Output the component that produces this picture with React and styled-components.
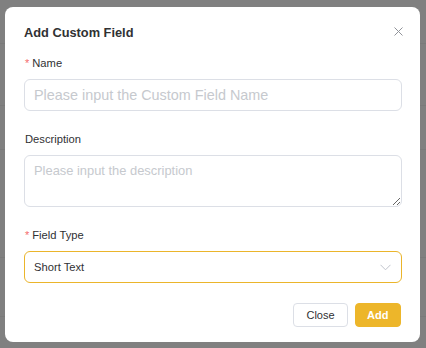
import React from "react";
import styled, { createGlobalStyle } from "styled-components";

const GlobalStyle = createGlobalStyle`
	body {
		margin: 0;
		background: #808080;
		font-family: "Liberation Sans", Arial, sans-serif;
	}
`;

const Backdrop = styled.div`
	width: 426px;
	height: 348px;
	box-sizing: border-box;
	padding: 7px 6px 6px 5px;
	background-color: #808080;
	background-image:
		linear-gradient(#7a7a7a, #7a7a7a),
		linear-gradient(#7a7a7a, #7a7a7a),
		linear-gradient(#7a7a7a, #7a7a7a),
		linear-gradient(#7a7a7a, #7a7a7a),
		linear-gradient(#7a7a7a, #7a7a7a);
	background-size: 100% 1px;
	background-repeat: no-repeat;
	background-position: 0 43px, 0 105px, 0 149px, 0 257px, 0 316px;
	display: flex;
`;

const Dialog = styled.div`
	position: relative;
	flex: 1;
	background: #fff;
	border-radius: 8px;
	display: flex;
	flex-direction: column;
`;

const Header = styled.div`
	padding: 16px 18px 10px 19px;
`;

const Title = styled.h2`
	margin: 0;
	font-size: 12.8px;
	line-height: 20px;
	font-weight: bold;
	color: #303133;
`;

const CloseIcon = styled.button`
	position: absolute;
	top: 18px;
	right: 16px;
	width: 12px;
	height: 12px;
	padding: 0;
	border: none;
	background: transparent;
	display: flex;
	align-items: center;
	justify-content: center;
	cursor: pointer;
`;

const Body = styled.div`
	padding: 0 18px 0 19px;
	display: flex;
	flex-direction: column;
	gap: 18px;
`;

const Item = styled.div`
	display: flex;
	flex-direction: column;
	gap: 6px;
`;

const Label = styled.label`
	font-size: 11.2px;
	line-height: 20px;
	color: #303133;
	padding-left: 1px;
`;

const Star = styled.span`
	color: #f56c6c;
	margin-right: 3px;
	font-size: 11px;
`;

const Input = styled.input`
	box-sizing: border-box;
	width: 100%;
	height: 32px;
	border: 1px solid #dcdfe6;
	border-radius: 6px;
	padding: 0 9px;
	font-family: inherit;
	font-size: 14.4px;
	color: #303133;
	outline: none;
	&::placeholder {
		color: #c6c9ce;
	}
`;

const TextArea = styled.textarea`
	box-sizing: border-box;
	display: block;
	width: 100%;
	height: 52px;
	border: 1px solid #dcdfe6;
	border-radius: 6px;
	padding: 5px 9px;
	font-family: inherit;
	font-size: 12.9px;
	line-height: 20px;
	color: #303133;
	outline: none;
	&::placeholder {
		color: #c6c9ce;
	}
`;

const Select = styled.div`
	box-sizing: border-box;
	height: 32px;
	border: 1px solid #ebb52b;
	border-radius: 6px;
	padding: 0 10px 0 9px;
	display: flex;
	align-items: center;
	justify-content: space-between;
	font-size: 11.2px;
	color: #303133;
`;

const Footer = styled.div`
	margin-top: 20px;
	padding: 0 19px 15px 19px;
	display: flex;
	justify-content: flex-end;
	gap: 7px;
`;

const Button = styled.button`
	box-sizing: border-box;
	height: 24px;
	padding: 0 ${(p) => (p.primary ? "11.5px" : "12px")};
	border-radius: 4px;
	font-family: inherit;
	font-size: 11px;
	cursor: pointer;
	border: 1px solid ${(p) => (p.primary ? "#edb62a" : "#dcdfe6")};
	background: ${(p) => (p.primary ? "#edb62a" : "#fff")};
	color: ${(p) => (p.primary ? "#fff" : "#303133")};
	font-weight: ${(p) => (p.primary ? "bold" : "normal")};
`;

export default function App() {
	return (
		<>
			<GlobalStyle />
			<Backdrop>
				<Dialog>
					<Header>
						<Title>Add Custom Field</Title>
					</Header>
					<CloseIcon aria-label="close">
						<svg width="9" height="9" viewBox="0 0 9 9">
							<path d="M0.5 0.5L8.5 8.5M8.5 0.5L0.5 8.5" stroke="#909399" strokeWidth="1" />
						</svg>
					</CloseIcon>
					<Body>
						<Item>
							<Label>
								<Star>*</Star>Name
							</Label>
							<Input placeholder="Please input the Custom Field Name" />
						</Item>
						<Item>
							<Label>Description</Label>
							<TextArea placeholder="Please input the description" />
						</Item>
						<Item>
							<Label>
								<Star>*</Star>Field Type
							</Label>
							<Select>
								<span>Short Text</span>
								<svg width="11" height="7" viewBox="0 0 11 7">
									<path d="M0.5 0.8L5.5 5.8L10.5 0.8" fill="none" stroke="#c0c4cc" strokeWidth="1" />
								</svg>
							</Select>
						</Item>
					</Body>
					<Footer>
						<Button>Close</Button>
						<Button primary>Add</Button>
					</Footer>
				</Dialog>
			</Backdrop>
		</>
	);
}
